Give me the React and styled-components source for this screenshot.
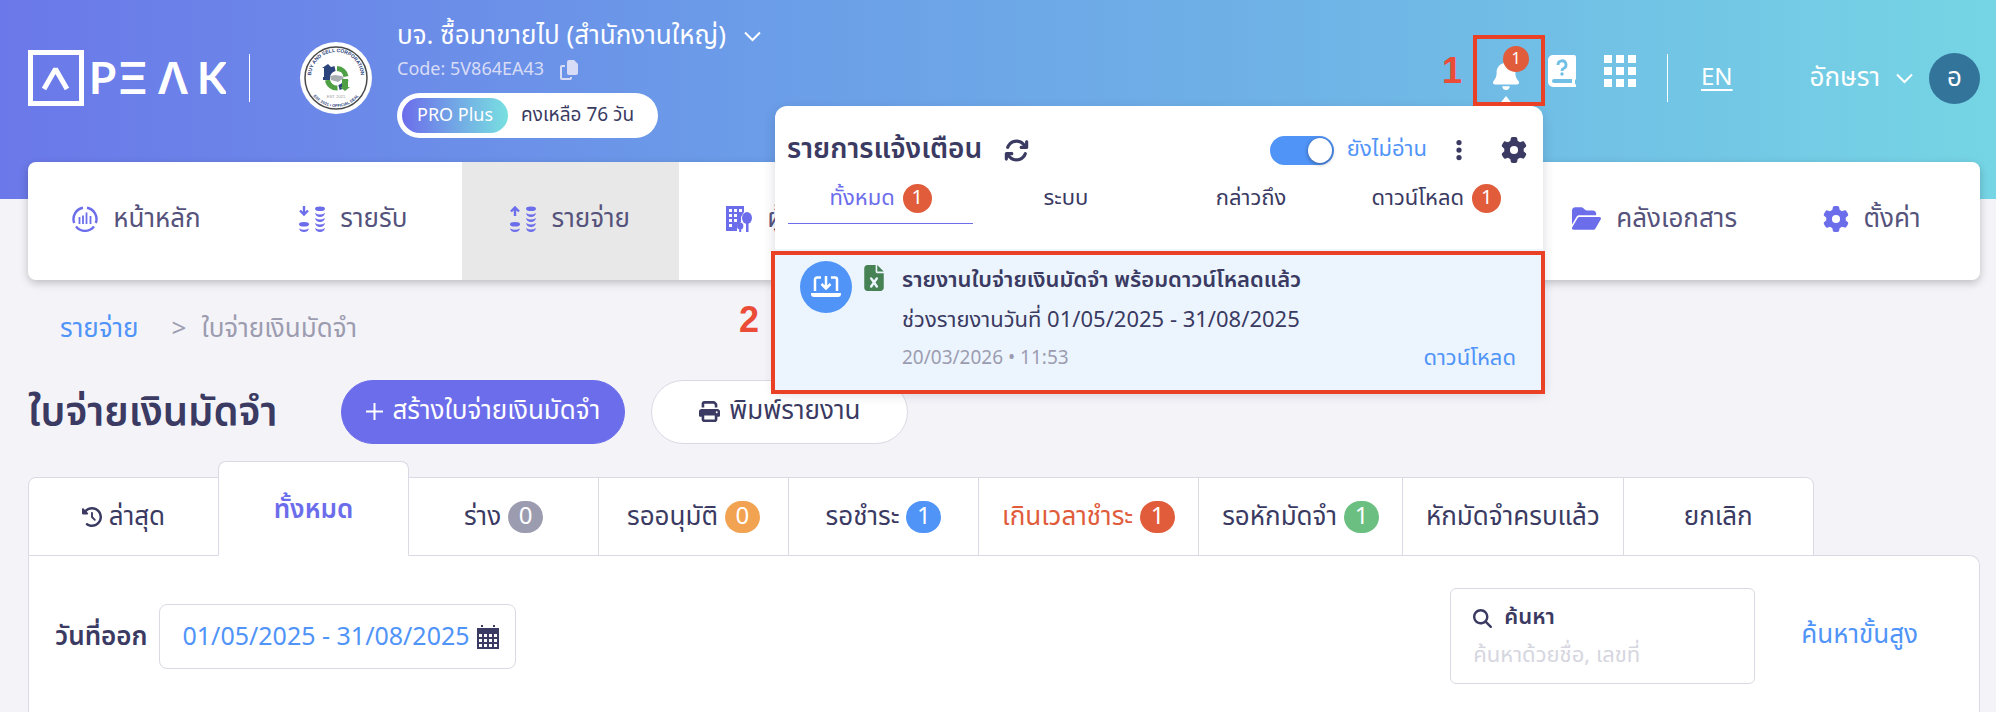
import { useState } from "react";
import styled, { createGlobalStyle } from "styled-components";
import {
  FaArrowsRotate,
  FaBell,
  FaClockRotateLeft,
  FaEllipsisVertical,
  FaFileExcel,
  FaFolderOpen,
  FaGear,
  FaMagnifyingGlass,
  FaPrint,
} from "react-icons/fa6";

const ink = "#3a3a62";
const violet = "#6c6deb";
const blue = "#5094f8";
const red = "#e05c3b";
const line = "#dadae4";
const grey = "#9c9cb0";
const mark = "#ea4026";

const GlobalStyle = createGlobalStyle`
  * {
    box-sizing: border-box;
  }
  body {
    margin: 0;
    background: #f4f3f8;
    color: ${ink};
    font-family: "Noto Sans Thai", "Noto Sans", sans-serif;
    font-size: 26px;
    font-weight: 400;
    line-height: 36px;
  }
  button, input {
    font: inherit;
    color: inherit;
    border: 0;
    padding: 0;
    background: none;
  }
  a {
    color: ${blue};
    text-decoration: none;
  }
  svg {
    display: block;
    flex: none;
  }
`;

const Page = styled.div`
  min-height: 100vh;
  display: flex;
  flex-direction: column;
`;

const Header = styled.header`
  color: #fff;
  padding: 0 16px 43px 28px;
  background: linear-gradient(90deg, #6b78e9 0%, #6b9de8 38%, #70b9e6 72%, #75d5e4 100%);
`;

const HeaderBar = styled.div`
  display: flex;
  align-items: center;
  height: 156px;
`;

const Divider = styled.span`
  width: 1px;
  height: 48px;
  background: #fff;
`;

const Logo = styled.a`
  margin-right: 23px;
`;

const Seal = styled.div`
  margin: 0 25px 0 50px;
`;

const Company = styled.div`
  display: flex;
  flex-direction: column;
  align-items: flex-start;
`;

const CompanyButton = styled.button`
  display: flex;
  align-items: center;
  gap: 18px;
  height: 36px;
`;

const Code = styled.div`
  display: flex;
  align-items: center;
  gap: 16px;
  height: 32px;
  margin-bottom: 7px;
  font-size: 18px;
  color: #d8dcf6;
`;

const Plan = styled.div`
  display: flex;
  align-items: center;
  gap: 13px;
  height: 45px;
  padding: 0 24px 0 5px;
  border-radius: 23px;
  background: #fff;
  color: ${ink};
  font-size: 19px;
`;

const PlanName = styled.span`
  height: 35px;
  line-height: 35px;
  padding: 0 15px;
  border-radius: 18px;
  color: #fff;
  font-size: 18px;
  background: linear-gradient(90deg, ${violet}, #78e0e0);
`;

const Tools = styled.div`
  display: flex;
  align-items: center;
  margin-left: auto;
`;

const IconTools = styled.div`
  display: flex;
  align-items: center;
  margin: 0 31px 15px 0;
`;

const ToolButton = styled.button`
  margin-left: ${(p) => p.$gap}px;
`;

const BellBox = styled.div`
  position: relative;
  display: flex;
  justify-content: center;
  align-items: center;
  width: 72px;
  height: 71px;
  padding-right: 6px;
`;

const BellButton = styled.button`
  position: relative;
  padding-top: 8px;
`;

const BellCount = styled.span`
  position: absolute;
  top: -6px;
  left: 12px;
  width: 26px;
  height: 26px;
  border-radius: 50%;
  background: ${red};
  font-size: 16px;
  line-height: 26px;
  text-align: center;
`;

const Frame = styled.span`
  position: absolute;
  inset: ${(p) => p.$inset};
  z-index: 6;
  border: 4px solid ${mark};
  pointer-events: none;
`;

const Step = styled.span`
  position: absolute;
  left: ${(p) => p.$left}px;
  top: 50%;
  transform: translateY(-50%);
  color: #ea4c38;
  font-family: "Liberation Sans", sans-serif;
  font-size: 36px;
  font-weight: 700;
  line-height: 36px;
`;

const Language = styled.a`
  margin: 0 77px 0 33px;
  color: #fff;
  font-size: 24px;
  text-decoration: underline;
  text-decoration-thickness: 2px;
  text-underline-offset: 4px;
`;

const UserButton = styled.button`
  display: flex;
  align-items: center;
  gap: 16px;
`;

const Avatar = styled.span`
  width: 51px;
  height: 51px;
  border-radius: 50%;
  background: #33749b;
  line-height: 50px;
`;

const Popup = styled.section`
  position: absolute;
  top: 71px;
  right: 2px;
  z-index: 5;
  width: 768px;
  border-radius: 12px 12px 0 0;
  background: #fff;
  color: ${ink};
  box-shadow: 0 4px 12px rgba(40, 40, 80, 0.18);
  &::before {
    content: "";
    position: absolute;
    top: -10px;
    right: 29px;
    border: 8px solid transparent;
    border-top: 0;
    border-bottom: 10px solid #fff;
  }
`;

const PopupHead = styled.div`
  display: flex;
  align-items: center;
  height: 62px;
  padding: 26px 16px 0 12px;
`;

const PopupTitle = styled.h2`
  margin: 0 22px 0 0;
  font-size: 28px;
  font-weight: 600;
`;

const Unread = styled.label`
  display: flex;
  align-items: center;
  gap: 13px;
  margin: 0 20px 0 auto;
  color: ${blue};
  font-size: 22px;
`;

const Toggle = styled.input`
  appearance: none;
  width: 64px;
  height: 29px;
  margin: 0;
  border-radius: 15px;
  background: ${(p) => (p.checked ? blue : grey)};
  &::before {
    content: "";
    display: block;
    width: 24px;
    height: 25px;
    margin: 2px 2px 2px ${(p) => (p.checked ? "38px" : "2px")};
    border-radius: 50%;
    background: #fff;
    box-shadow: 0 1px 4px rgba(0, 0, 0, 0.4);
  }
`;

const PopupTabs = styled.div`
  display: grid;
  grid-template-columns: repeat(4, 1fr);
  padding: 0 14px 25px 13px;
`;

const PopupTab = styled.button`
  display: flex;
  justify-content: center;
  align-items: center;
  gap: 8px;
  height: 56px;
  padding-top: 6px;
  font-size: 22px;
  color: ${(p) => (p.$active ? violet : ink)};
  border-bottom: 1px solid ${(p) => (p.$active ? violet : "transparent")};
`;

const Badge = styled.span`
  min-width: ${(p) => p.$width}px;
  height: ${(p) => p.$height}px;
  border-radius: 16px;
  background: ${(p) => p.$color};
  color: #fff;
  font-size: ${(p) => (p.$height > 30 ? 24 : 20)}px;
  font-weight: 400;
  line-height: ${(p) => p.$height}px;
  text-align: center;
`;

const Notice = styled.article`
  position: relative;
  display: grid;
  grid-template-columns: 52px 26px 1fr;
  column-gap: 9px;
  padding: 12px 27px 11px 25px;
  background: #ecf5fe;
`;

const NoticeIcon = styled.span`
  display: grid;
  place-items: center;
  width: 52px;
  height: 52px;
  border-radius: 50%;
  background: ${blue};
`;

const FileIcon = styled(FaFileExcel)`
  margin-top: 4px;
  color: #468254;
`;

const NoticeBody = styled.div`
  margin: 2px 0 0 6px;
  font-size: 22px;
`;

const NoticeTitle = styled.h3`
  margin: 0 0 4px;
  font-size: 22px;
  font-weight: 600;
  line-height: 36px;
`;

const NoticeFoot = styled.div`
  display: flex;
  justify-content: space-between;
  align-items: center;
  height: 40px;
`;

const Time = styled.time`
  color: ${grey};
  font-size: 19px;
`;

const Nav = styled.nav`
  display: grid;
  grid-template-columns: repeat(9, 1fr);
  position: relative;
  z-index: 1;
  height: 118px;
  margin: -37px 16px 0 28px;
  border-radius: 8px;
  background: #fff;
  box-shadow: 0 3px 8px rgba(0, 0, 0, 0.22);
`;

const NavItem = styled.a`
  grid-column: ${(p) => p.$column};
  display: flex;
  justify-content: center;
  align-items: center;
  gap: 15px;
  padding-bottom: 5px;
  color: #55527c;
  white-space: nowrap;
  background: ${(p) => (p.$active ? "#e8e8e8" : "transparent")};
  svg {
    color: ${violet};
  }
`;

const Breadcrumb = styled.div`
  display: flex;
  gap: 15px;
  padding: 31px 60px 0;
  color: ${grey};
`;

const Crumb = styled.a`
  margin-right: 18px;
`;

const TitleRow = styled.div`
  display: flex;
  align-items: center;
  height: 64px;
  margin-top: 33px;
  padding-left: 28px;
`;

const PageTitle = styled.h1`
  margin: 4px 64px 0 0;
  font-size: 40px;
  font-weight: 600;
  line-height: 56px;
`;

const PillButton = styled.button`
  display: flex;
  justify-content: center;
  align-items: center;
  gap: 9px;
  height: 64px;
  margin-right: 26px;
  padding: 0 ${(p) => (p.$primary ? 24 : 47)}px 2px;
  border: 1px solid ${(p) => (p.$primary ? violet : line)};
  border-radius: 32px;
  background: ${(p) => (p.$primary ? violet : "#fff")};
  color: ${(p) => (p.$primary ? "#fff" : ink)};
`;

const Tabs = styled.div`
  display: flex;
  align-items: flex-end;
  padding: 17px 16px 0 28px;
`;

const Tab = styled.button`
  display: flex;
  justify-content: center;
  align-items: center;
  gap: 7px;
  min-width: 191px;
  height: ${(p) => (p.$active ? 95 : 79)}px;
  margin: 0 -1px -1px 0;
  padding: ${(p) => (p.$active ? 3 : 0)}px 23px 0;
  border: 1px solid ${line};
  border-bottom-color: ${(p) => (p.$active ? "#fff" : line)};
  border-radius: ${(p) => (p.$active ? "8px 8px 0 0" : "0")};
  background: #fff;
  color: ${(p) => p.$color || ink};
  font-weight: ${(p) => (p.$active ? 600 : 400)};
  position: relative;
  z-index: ${(p) => (p.$active ? 1 : 0)};
  &:first-child {
    border-top-left-radius: 8px;
  }
  &:last-child {
    border-top-right-radius: 8px;
  }
`;

const Panel = styled.main`
  flex: 1;
  display: flex;
  align-items: flex-start;
  margin: 0 16px 0 28px;
  padding: 32px 61px 0 26px;
  border: 1px solid ${line};
  border-bottom: 0;
  border-radius: 0 10px 0 0;
  background: #fff;
`;

const DateField = styled.label`
  display: flex;
  align-items: center;
  gap: 11px;
  margin-top: 16px;
  font-weight: 600;
`;

const DateBox = styled.span`
  display: flex;
  align-items: center;
  width: 357px;
  height: 65px;
  padding: 0 16px 0 23px;
  border: 1px solid ${line};
  border-radius: 8px;
`;

const DateInput = styled.input`
  flex: 1;
  min-width: 0;
  color: ${blue};
  font-size: 25px;
  font-weight: 400;
`;

const SearchBox = styled.label`
  width: 305px;
  height: 96px;
  margin-left: auto;
  padding: 11px 22px;
  border: 1px solid ${line};
  border-radius: 6px;
`;

const SearchLabel = styled.span`
  display: flex;
  align-items: center;
  gap: 12px;
  font-size: 22px;
  font-weight: 600;
`;

const SearchInput = styled.input`
  width: 100%;
  font-size: 22px;
  &::placeholder {
    color: #d6d6e0;
    opacity: 1;
  }
`;

const Advanced = styled.a`
  margin: 29px 0 0 46px;
`;

const PeakLogo = () => (
  <svg width="198" height="56" viewBox="0 0 198 56" fill="#fff">
    <path d="M0 0h56v56H0zM5 5v46h46V5z" fillRule="evenodd" />
    <path d="M16 39 27.500 19 39 39" fill="none" stroke="#fff" strokeWidth="5" strokeLinejoin="bevel" />
    <g fontFamily="Lato" fontSize="44" fontWeight="700">
      <text x="61" y="44">P</text>
      <text x="169" y="44">K</text>
    </g>
    <g fontFamily="Inter" fontSize="44" fontWeight="600">
      <text x="90" y="44">Ξ</text>
      <text x="129" y="44">Λ</text>
    </g>
  </svg>
);

const SealLogo = () => (
  <svg width="72" height="72" viewBox="0 0 72 72">
    <defs>
      <path id="sealTop" d="M12 42a25 25 0 1 1 48 0" />
      <path id="sealBottom" d="M7 36a29 29 0 0 0 58 0" />
    </defs>
    <circle cx="36" cy="36" r="36" fill="#fff" />
    <circle cx="36" cy="36" r="31" fill="none" stroke="#4a4a4a" strokeWidth="1.500" />
    <g fontFamily="Liberation Sans" fontWeight="700" fill="#2c447c" textAnchor="middle">
      <text fontSize="5"><textPath href="#sealTop" startOffset="50%">BUY AND SELL CORPORATION</textPath></text>
      <text fontSize="4"><textPath href="#sealBottom" startOffset="50%">EST. 2021 • OFFICIAL SEAL</textPath></text>
    </g>
    <g fill="none" strokeWidth="5">
      <path d="M37 26.500a9.500 9.500 0 0 1 9 8" stroke="#4f9f45" />
      <path d="M27.500 38a9.500 9.500 0 0 0 10 8" stroke="#4f9f45" />
      <path d="M28 33a9.500 9.500 0 0 1 7-6.500M46 38a9.500 9.500 0 0 1-7 7.500" stroke="#2c447c" />
    </g>
    <path d="M42 37h6v8h2l-5 4-5-4h2z" fill="#4f9f45" />
    <path d="M28 22l4 4h-2v9h-6v-9h-2zM23 35h7v3h-7z" fill="#2c447c" />
    <path d="M30 34l5-1 7 1 2 2-6 4-7-2z" fill="#a9aeb3" />
    <text x="36" y="56" fontFamily="Liberation Sans" fontSize="4" fill="#999" textAnchor="middle">EST. 2021</text>
  </svg>
);

const Chevron = () => (
  <svg width="17" height="11" viewBox="0 0 17 11" fill="none" stroke="currentColor" strokeWidth="2">
    <path d="M1 1.500 8.500 9 16 1.500" />
  </svg>
);

const CopyIcon = () => (
  <svg width="18" height="20" viewBox="0 0 18 20">
    <path d="M9 0h5l4 4v9a2 2 0 0 1-2 2H9a2 2 0 0 1-2-2V2a2 2 0 0 1 2-2z" fill="currentColor" />
    <path d="M5 6H2a1 1 0 0 0-1 1v11a1 1 0 0 0 1 1h8a1 1 0 0 0 1-1v-1" fill="none" stroke="currentColor" strokeWidth="2" />
  </svg>
);

const BookIcon = () => (
  <svg width="28" height="32" viewBox="0 0 28 32">
    <path d="M5 0h21a2 2 0 0 1 2 2v21a2 2 0 0 1-1 2v4a2 2 0 0 1 1 3H5a5 5 0 0 1-5-5V5a5 5 0 0 1 5-5zM6 24a2 2 0 0 0 0 4h18v-4z" fill="#fff" fillRule="evenodd" />
    <path d="M10 10a4 4 0 1 1 5.500 3.500Q14 14 14 16" fill="none" stroke="#71bfe6" strokeWidth="2.800" />
    <circle cx="14" cy="19" r="1.700" fill="#71bfe6" />
  </svg>
);

const AppsIcon = () => (
  <svg width="32" height="32" viewBox="0 0 32 32" fill="#fff">
    {[0, 12, 24].map((y) => [0, 12, 24].map((x) => <rect key={x + "-" + y} x={x} y={y} width="8" height="8" />))}
  </svg>
);

const HomeIcon = () => (
  <svg width="26" height="26" viewBox="0 0 26 26" fill="none" stroke="currentColor" strokeWidth="2.400">
    <path d="M2.200 17A11.500 11.500 0 0 1 11 1.700M15 1.700A11.500 11.500 0 0 1 23.800 17M22 20.500a11.500 11.500 0 0 1-18 0" />
    <path d="M7.500 18v-7M11 18V9.500M14.500 18V6.500M18.500 18v-8" strokeWidth="1.800" />
  </svg>
);

const CoinsIcon = ({ up }) => (
  <svg width="26" height="26" viewBox="0 0 26 26" fill="currentColor">
    <path
      d={up ? "M5 10V2M1 5.500 5 1.500 9 5.500" : "M5 0v8M1 4.500 5 8.500 9 4.500"}
      fill="none"
      stroke="currentColor"
      strokeWidth="2.400"
    />
    <ellipse cx="5" cy="18.300" rx="5" ry="2.300" />
    <path d="M0 22.500q5 2.500 10 0-1 3.500-5 3.500t-5-3.500z" />
    <ellipse cx="21" cy="2.800" rx="5" ry="2.300" />
    {[7, 12, 17, 22].map((y) => (
      <path key={y} d={`M16 ${y}q5 3 10 0-1 4-5 4t-5-4z`} />
    ))}
  </svg>
);

const BuildingIcon = () => (
  <svg width="26" height="26" viewBox="0 0 26 26" fill="currentColor">
    <path d="M0 0h18v6l-3 5v5l-4 3v6H0zM3 3v3h3V3zM8 3v3h3V3zM13 3v3h3V3zM3 8v3h3V8zM8 8v3h3V8zM3 13v3h3v-3zM8 13v3h3v-3zM3 18v3h3v-3z" fillRule="evenodd" />
    <ellipse cx="21" cy="12" rx="5" ry="6" />
    <path d="M20 16h2.500v10H20zM13.200 22h2v4h-2z" />
    <ellipse cx="14.200" cy="20" rx="3.200" ry="3.500" />
  </svg>
);

const LaptopIcon = () => (
  <svg width="30" height="22" viewBox="0 0 30 22" fill="none" stroke="#fff" strokeWidth="2.500">
    <path d="M10 1.500H6a2 2 0 0 0-2 2V15M20 1.500h4a2 2 0 0 1 2 2V15M15 0v12M10.500 8 15 12.500 19.500 8" />
    <path d="M0 17h30v1a3 3 0 0 1-3 3H3a3 3 0 0 1-3-3z" fill="#fff" stroke="none" />
  </svg>
);

const CalendarIcon = () => (
  <svg width="22" height="24" viewBox="0 0 22 24" fill={ink}>
    <path d="M4 0h2v2H4zM16 0h2v2h-2zM0 3h22v21H0zM2 9v3h3V9zM7 9v3h3V9zM12 9v3h3V9zM17 9v3h3V9zM2 14v3h3v-3zM7 14v3h3v-3zM12 14v3h3v-3zM17 14v3h3v-3zM2 19v3h3v-3zM7 19v3h3v-3zM12 19v3h3v-3zM17 19v3h3v-3z" fillRule="evenodd" />
  </svg>
);

const PlusIcon = () => (
  <svg width="17" height="17" viewBox="0 0 17 17" stroke="currentColor" strokeWidth="2">
    <path d="M8.500 0v17M0 8.500h17" />
  </svg>
);

const navItems = [
  { label: "หน้าหลัก", icon: <HomeIcon />, column: 1 },
  { label: "รายรับ", icon: <CoinsIcon />, column: 2 },
  { label: "รายจ่าย", icon: <CoinsIcon up />, column: 3, active: true },
  { label: "ผู้ติดต่อ", icon: <BuildingIcon />, column: 4 },
  { label: "คลังเอกสาร", icon: <FaFolderOpen size={29} />, column: 8 },
  { label: "ตั้งค่า", icon: <FaGear size={26} />, column: 9 },
];

const popupTabs = [
  { label: "ทั้งหมด", count: 1 },
  { label: "ระบบ" },
  { label: "กล่าวถึง" },
  { label: "ดาวน์โหลด", count: 1 },
];

const tabs = [
  { label: "ล่าสุด", icon: <FaClockRotateLeft size={20} /> },
  { label: "ทั้งหมด", color: violet },
  { label: "ร่าง", count: 0, badge: "#9c9cb0" },
  { label: "รออนุมัติ", count: 0, badge: "#f2a352" },
  { label: "รอชำระ", count: 1, badge: blue },
  { label: "เกินเวลาชำระ", count: 1, badge: red, color: red },
  { label: "รอหักมัดจำ", count: 1, badge: "#6bbf80" },
  { label: "หักมัดจำครบแล้ว" },
  { label: "ยกเลิก" },
];

const Notifications = () => {
  const [unread, setUnread] = useState(true);
  const [tab, setTab] = useState(0);
  return (
    <Popup>
      <PopupHead>
        <PopupTitle>รายการแจ้งเตือน</PopupTitle>
        <button aria-label="รีเฟรช"><FaArrowsRotate size={25} /></button>
        <Unread>
          <Toggle type="checkbox" checked={unread} onChange={(e) => setUnread(e.target.checked)} />
          ยังไม่อ่าน
        </Unread>
        <button aria-label="เพิ่มเติม"><FaEllipsisVertical size={24} /></button>
        <ToolButton $gap={30} aria-label="ตั้งค่า"><FaGear size={26} /></ToolButton>
      </PopupHead>
      <PopupTabs>
        {popupTabs.map((t, i) => (
          <PopupTab key={t.label} $active={i === tab} onClick={() => setTab(i)}>
            {t.label}
            {t.count && <Badge $width={29} $height={29} $color={red}>{t.count}</Badge>}
          </PopupTab>
        ))}
      </PopupTabs>
      <Notice>
        <NoticeIcon><LaptopIcon /></NoticeIcon>
        <FileIcon size={26} />
        <NoticeBody>
          <NoticeTitle>รายงานใบจ่ายเงินมัดจำ พร้อมดาวน์โหลดแล้ว</NoticeTitle>
          <div>ช่วงรายงานวันที่ 01/05/2025 - 31/08/2025</div>
          <NoticeFoot>
            <Time>20/03/2026 • 11:53</Time>
            <a href="#download">ดาวน์โหลด</a>
          </NoticeFoot>
        </NoticeBody>
        <Frame $inset="2px -2px -4px -4px" />
        <Step $left={-36}>2</Step>
      </Notice>
    </Popup>
  );
};

export default function App() {
  const [active, setActive] = useState(1);
  const [range, setRange] = useState("01/05/2025 - 31/08/2025");
  return (
    <Page>
      <GlobalStyle />
      <Header>
        <HeaderBar>
          <Logo href="#home" aria-label="PEAK"><PeakLogo /></Logo>
          <Divider />
          <Seal><SealLogo /></Seal>
          <Company>
            <CompanyButton>บจ. ซื้อมาขายไป (สำนักงานใหญ่) <Chevron /></CompanyButton>
            <Code>Code: 5V864EA43 <CopyIcon /></Code>
            <Plan><PlanName>PRO Plus</PlanName>คงเหลือ 76 วัน</Plan>
          </Company>
          <Tools>
            <IconTools>
              <BellBox>
                <BellButton aria-label="แจ้งเตือน">
                  <FaBell size={30} />
                  <BellCount>1</BellCount>
                </BellButton>
                <Notifications />
                <Frame $inset="0" />
                <Step $left={-31}>1</Step>
              </BellBox>
              <ToolButton $gap={3} aria-label="คู่มือ"><BookIcon /></ToolButton>
              <ToolButton $gap={28} aria-label="แอป"><AppsIcon /></ToolButton>
            </IconTools>
            <Divider />
            <Language href="#en">EN</Language>
            <UserButton>อักษรา <Chevron /><Avatar>อ</Avatar></UserButton>
          </Tools>
        </HeaderBar>
      </Header>
      <Nav>
        {navItems.map((n) => (
          <NavItem key={n.label} href="#nav" $column={n.column} $active={n.active}>
            {n.icon}
            {n.label}
          </NavItem>
        ))}
      </Nav>
      <Breadcrumb>
        <Crumb href="#expense">รายจ่าย</Crumb>
        <span>&gt;</span>
        <span>ใบจ่ายเงินมัดจำ</span>
      </Breadcrumb>
      <TitleRow>
        <PageTitle>ใบจ่ายเงินมัดจำ</PageTitle>
        <PillButton $primary><PlusIcon />สร้างใบจ่ายเงินมัดจำ</PillButton>
        <PillButton><FaPrint size={21} />พิมพ์รายงาน</PillButton>
      </TitleRow>
      <Tabs>
        {tabs.map((t, i) => (
          <Tab key={t.label} $active={i === active} $color={t.color} onClick={() => setActive(i)}>
            {t.icon}
            {t.label}
            {t.badge && <Badge $width={35} $height={32} $color={t.badge}>{t.count}</Badge>}
          </Tab>
        ))}
      </Tabs>
      <Panel>
        <DateField>
          วันที่ออก
          <DateBox>
            <DateInput value={range} onChange={(e) => setRange(e.target.value)} />
            <CalendarIcon />
          </DateBox>
        </DateField>
        <SearchBox>
          <SearchLabel><FaMagnifyingGlass size={19} />ค้นหา</SearchLabel>
          <SearchInput placeholder="ค้นหาด้วยชื่อ, เลขที่" />
        </SearchBox>
        <Advanced href="#advanced">ค้นหาขั้นสูง</Advanced>
      </Panel>
    </Page>
  );
}
